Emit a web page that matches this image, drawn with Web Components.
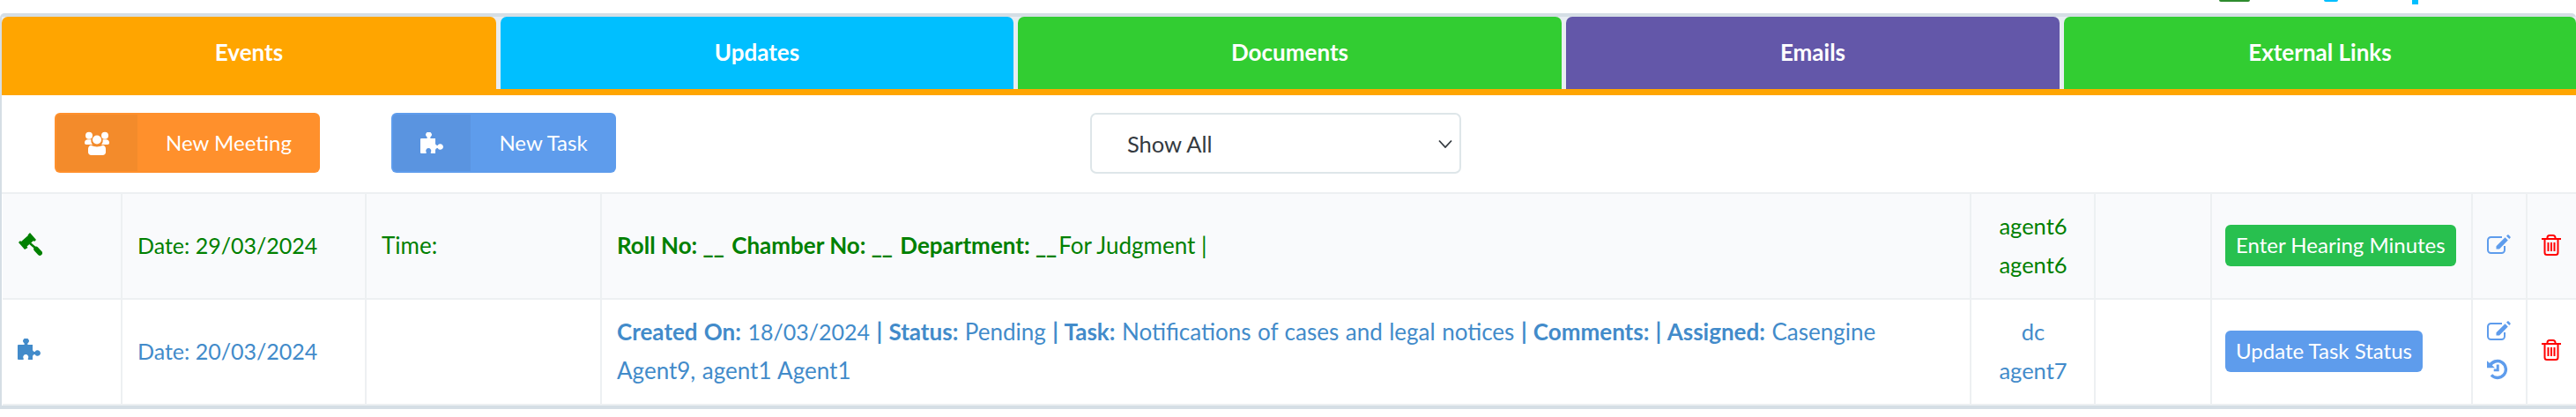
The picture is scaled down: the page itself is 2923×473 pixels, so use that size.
<!DOCTYPE html>
<html>
<head>
<meta charset="utf-8">
<title>Events</title>
<style>
  html, body { margin: 0; background: #fff; }
  body { font-family: Lato, "Noto Sans", sans-serif; font-size: 26px; height: 473px; overflow: hidden; }
</style>
</head>
<body>
<svg width="0" height="0" style="position:absolute">
  <defs>
    <symbol id="i-puzzle" viewBox="0 0 26 24"><path fill="currentColor" d="M0 8Q0 7 1 7H7C8 7 8 6 7.400 5.300A3.300 3.300 0 1 1 11.600 5.300C11 6 11 7 12 7H17V12.500C17 14 18.500 15.500 19.700 15A3.300 3.300 0 1 1 19.700 18C18.500 17.500 17 19 17 20.500V24H12.500C11.500 24 11.500 23 12 22.300A3 3 0 1 0 6.500 22.300C7 23 7 24 6 24H1Q0 24 0 23Z"/></symbol>
    <symbol id="i-users" viewBox="0 0 28 27"><g fill="currentColor"><circle cx="5" cy="4.700" r="4"/><circle cx="23" cy="4.700" r="4"/><path d="M0 13c0-2.500 1.500-3.700 3.500-3.700h4c-.5 2.200 0 4.200 1.500 5.700H2c-1.300 0-2-.7-2-2zM28 13c0-2.500-1.500-3.700-3.500-3.700h-4c.5 2.200 0 4.200-1.500 5.700h7c1.300 0 2-.7 2-2z"/><circle cx="14" cy="9.500" r="5"/><path d="M4 20c0-2.700 1.500-4.300 3.500-4.300 3.800 2.300 9.200 2.300 13 0 2 0 3.500 1.600 3.500 4.300v3.500c0 2-1.500 3.500-3.500 3.500h-13C5.500 27 4 25.500 4 23.500z"/></g></symbol>
    <symbol id="i-gavel" viewBox="0 0 27 27"><g fill="currentColor"><path d="M13 0 20 8 18 10 17 9 9.500 15.500 10.500 17 7 19 0 11 2 9 3 10 11 3 10.500 2.500Z"/></g><path d="M13 12 20 18" stroke="currentColor" stroke-width="2.500" fill="none"/><path d="M20 18.500 24.200 23" stroke="currentColor" stroke-width="5.500" stroke-linecap="round" fill="none"/></symbol>
    <symbol id="i-edit" viewBox="0 0 27 22"><path fill="none" stroke="currentColor" stroke-width="2" d="M20 13v4.500a3.500 3.500 0 0 1-3.500 3.500H4.500A3.500 3.500 0 0 1 1 17.500V6.500A3.500 3.500 0 0 1 4.500 3H17"/><path fill="currentColor" d="M20.500 3.200l3.300 3.300L14 16.500H10.500v-3.300zM22 1.700l1.200-1.200c.4-.4 1-.4 1.400 0l1.900 1.900c.4.4.4 1 0 1.400l-1.200 1.200z"/></symbol>
    <symbol id="i-trash" viewBox="0 0 22 24"><g fill="none" stroke="currentColor" stroke-width="2"><path d="M0 5h22"/><path d="M3.500 5v15.500A2.500 2.500 0 0 0 6 23h10a2.500 2.500 0 0 0 2.500-2.500V5"/><path d="M6.500 5V3.500A2.500 2.500 0 0 1 9 1h4a2.500 2.500 0 0 1 2.500 2.500V5"/><path d="M7.500 9v10M11 9v10M14.500 9v10"/></g></symbol>
    <symbol id="i-history" viewBox="0 0 28 28"><g fill="currentColor"><path d="M14 1a13 13 0 1 1-9.700 21.700l2.900-2.600A9 9 0 1 0 5.700 10.500L1 10.100C3 4.700 8 1 14 1z"/><path d="M0 2.500 10.500 12H0z"/><path d="M12.500 7.500h3.500v9H9v-3h3.500z"/></g></symbol>
  </defs>
</svg>

<template id="head-tpl">
  <style>
    :host { display: flex; align-items: flex-start; height: 15px; overflow: hidden; padding-left: 2518px; }
    .a { width: 35px; height: 2px; background: #2e8b2e; border-radius: 0 0 3px 3px; }
    .b { width: 16px; height: 2px; margin-left: 84px; background: #00bfff; border-radius: 0 0 8px 8px; }
    .c { width: 7px; height: 5px; margin-left: 84px; background: #00bfff; }
  </style>
  <span class="a"></span><span class="b"></span><span class="c"></span>
</template>

<template id="tab-tpl">
  <style>
    :host { display: flex; align-items: center; justify-content: center; box-sizing: border-box; height: 82px; border-radius: 7px 7px 0 0; background: var(--tab-bg); color: #fff; font-weight: 700; font-size: 26px; padding-bottom: 3px; }
  </style>
  <slot></slot>
</template>

<template id="tabs-tpl">
  <style>
    :host { display: grid; grid-template-columns: 561px 582px 617px 560px 1fr; column-gap: 5px; border-bottom: 7px solid #ffa500; background: #e8edf2; }
  </style>
  <slot></slot>
</template>

<template id="action-tpl">
  <style>
    :host { display: inline-flex; box-sizing: border-box; height: 68px; border-radius: 6px; overflow: hidden; color: #fff; background: var(--btn-bg); font-size: 24px; }
    .ico { display: flex; align-items: center; justify-content: center; background: var(--btn-dark); width: var(--ico-w); margin: 2px 0 2px 2px; border-radius: 4px 0 0 4px; }
    .lbl { flex: 1; display: flex; align-items: center; justify-content: center; padding-bottom: 2px; }
  </style>
  <span class="ico"><slot name="icon"></slot></span>
  <span class="lbl"><slot></slot></span>
</template>

<template id="select-tpl">
  <style>
    :host { display: block; position: relative; box-sizing: border-box; width: 421px; height: 69px; }
    select { appearance: none; width: 100%; height: 100%; box-sizing: border-box; padding: 0 40px 0 40px; border: 2px solid #dee6e9; border-radius: 7px; background: #fff; color: #343a40; font: 25.500px Lato, sans-serif; }
    svg { position: absolute; right: 10px; top: 30px; }
  </style>
  <select><option>Show All</option></select>
  <svg width="16" height="10" viewBox="0 0 16 10" fill="none" stroke="#343a40" stroke-width="1.800"><path d="M1 1.500 8 9l7-7.500"/></svg>
</template>

<template id="toolbar-tpl">
  <style>
    :host { display: flex; gap: 81px; padding: 20px 0 0 60px; height: 110px; box-sizing: border-box; align-items: flex-start; }
    ::slotted(filter-select) { margin-left: 457px; }
  </style>
  <slot></slot>
</template>

<template id="row-tpl">
  <style>
    :host { display: grid; grid-template-columns: 136px 277px 267px 1554px 141px 132px 296px 62px 56px; height: 120px; color: var(--row-color); background: var(--row-bg); font-size: 26px; line-height: 44px; border-bottom: 2px solid #edf0f2; box-sizing: border-box; }
  </style>
  <slot></slot>
</template>

<template id="cell-tpl">
  <style>
    :host { display: flex; flex-direction: column; justify-content: center; box-sizing: border-box; padding: 0 16px 3px 17px; border-right: 2px solid #edf0f2; min-width: 0; }
    :host([center]) { align-items: center; text-align: center; font-size: 25.500px; }
    :host([icon]) { padding: 0 0 0 16px; }
    :host([action]) { padding-left: 15px; }
    :host([last]) { border-right: 0; }
  </style>
  <slot></slot>
</template>

<template id="card-tpl">
  <style>
    :host { display: block; border: solid #d5dee5; border-width: 4px 0 4px 2px; border-radius: 5px 5px 0 0; background: #fff; }
    .sep { height: 2px; background: #edf0f2; }
    .body { padding-left: 1px; }
  </style>
  <slot name="tabs"></slot>
  <slot name="toolbar"></slot>
  <div class="sep"></div>
  <div class="body"><slot></slot></div>
</template>

<style>
  .btn-sm { display: inline-block; color: #fff; border-radius: 6px; padding: 0 12px; line-height: 45px; height: 47px; font-size: 24px; white-space: nowrap; vertical-align: middle; }
  .green { background: #28c04f; }
  .blue { background: #5e9cec; }
  .num { font-size: 25px; }
  .blank { padding-right: 2px; }
  .wide { word-spacing: 0.85px; }
  b { font-weight: 700; }
  .ic { display: block; }
</style>

<page-head></page-head>
<case-card>
  <tab-bar slot="tabs">
    <tab-item style="--tab-bg:#ffa500">Events</tab-item>
    <tab-item style="--tab-bg:#00bfff">Updates</tab-item>
    <tab-item style="--tab-bg:#32cd32">Documents</tab-item>
    <tab-item style="--tab-bg:#6357a9">Emails</tab-item>
    <tab-item style="--tab-bg:#32cd32">External Links</tab-item>
  </tab-bar>
  <tool-bar slot="toolbar">
    <action-button style="--btn-bg:#ff902c;--btn-dark:#f38b2b;--ico-w:92px;width:301px">
      <svg slot="icon" width="28" height="27"><use href="#i-users"/></svg>New Meeting
    </action-button>
    <action-button style="--btn-bg:#5e9cec;--btn-dark:#5a94e0;--ico-w:88px;width:255px">
      <svg slot="icon" width="26" height="24"><use href="#i-puzzle"/></svg>New Task
    </action-button>
    <filter-select></filter-select>
  </tool-bar>
  <event-row style="--row-color:#008000;--row-bg:#f9fafc">
    <row-cell icon><svg class="ic" width="27" height="27" style="margin:0 0 3px 2px"><use href="#i-gavel"/></svg></row-cell>
    <row-cell><span class="num">Date: 29/03/2024</span></row-cell>
    <row-cell>Time:</row-cell>
    <row-cell><span><b>Roll No: <span class="blank">__</span> Chamber No: <span class="blank">__</span> Department: <span class="blank">__</span></b>For Judgment |</span></row-cell>
    <row-cell center><span>agent6<br>agent6</span></row-cell>
    <row-cell></row-cell>
    <row-cell action><span><span class="btn-sm green">Enter Hearing Minutes</span></span></row-cell>
    <row-cell icon style="color:#5e9cec"><svg class="ic" width="27" height="22" style="margin-bottom:4px"><use href="#i-edit"/></svg></row-cell>
    <row-cell icon last style="color:#f00"><svg class="ic" width="22" height="24" style="margin-bottom:2px"><use href="#i-trash"/></svg></row-cell>
  </event-row>
  <event-row style="--row-color:#428bca;--row-bg:#fff">
    <row-cell icon><svg class="ic" width="26" height="24" style="margin:0 0 7px 1px"><use href="#i-puzzle"/></svg></row-cell>
    <row-cell><span class="num">Date: 20/03/2024</span></row-cell>
    <row-cell></row-cell>
    <row-cell><span class="wide"><b>Created On:</b> <span class="num">18/03/2024</span> <b>| Status:</b> Pending <b>| Task:</b> Notifications of cases and legal notices <b>| Comments: | Assigned:</b> Casengine<br>Agent9, agent1 Agent1</span></row-cell>
    <row-cell center><span>dc<br>agent7</span></row-cell>
    <row-cell></row-cell>
    <row-cell action><span><span class="btn-sm blue">Update Task Status</span></span></row-cell>
    <row-cell icon style="color:#5e9cec;gap:21px"><svg class="ic" width="27" height="22"><use href="#i-edit"/></svg><svg class="ic" width="24" height="24" style="margin-bottom:3px"><use href="#i-history"/></svg></row-cell>
    <row-cell icon last style="color:#f00"><svg class="ic" width="22" height="24" style="margin-bottom:4px"><use href="#i-trash"/></svg></row-cell>
  </event-row>
</case-card>

<script>
  function shadowFrom(id) {
    return class extends HTMLElement {
      constructor() {
        super();
        this.attachShadow({ mode: 'open' }).appendChild(document.getElementById(id).content.cloneNode(true));
      }
    };
  }
  customElements.define('page-head', shadowFrom('head-tpl'));
  customElements.define('case-card', shadowFrom('card-tpl'));
  customElements.define('tab-bar', shadowFrom('tabs-tpl'));
  customElements.define('tab-item', shadowFrom('tab-tpl'));
  customElements.define('tool-bar', shadowFrom('toolbar-tpl'));
  customElements.define('action-button', shadowFrom('action-tpl'));
  customElements.define('filter-select', shadowFrom('select-tpl'));
  customElements.define('event-row', shadowFrom('row-tpl'));
  customElements.define('row-cell', shadowFrom('cell-tpl'));
</script>
</body>
</html>
